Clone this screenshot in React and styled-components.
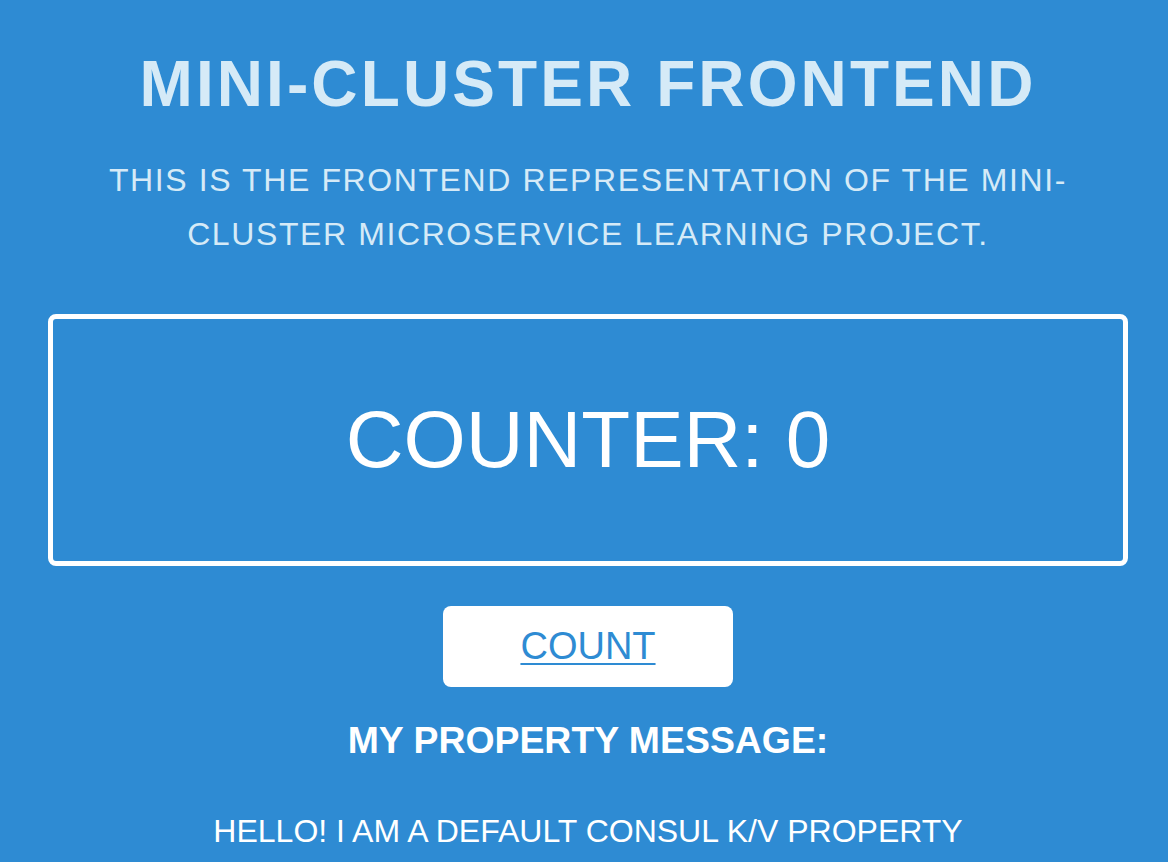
import React, { useState } from "react";
import styled, { createGlobalStyle } from "styled-components";

const BLUE = "#2e8bd3";

const GlobalStyle = createGlobalStyle`
  html, body {
    margin: 0;
    padding: 0;
    background: ${BLUE};
  }
  body {
    font-family: "Liberation Sans", Arial, sans-serif;
    min-height: 100vh;
    overflow: hidden;
  }
`;

const Page = styled.div`
  display: flex;
  flex-direction: column;
  align-items: center;
  padding: 47px 40px 0 48px;
  text-align: center;
  color: #fff;
`;

const Title = styled.h1`
  margin: 0;
  font-size: 64px;
  line-height: 74px;
  font-weight: 700;
  letter-spacing: 3.1px;
  color: #d5eaf7;
  text-transform: uppercase;
`;

const Subtitle = styled.p`
  margin: 32px 0 0;
  padding: 0 50px;
  font-size: 32px;
  line-height: 54px;
  letter-spacing: 1.6px;
  color: #d5eaf7;
  text-transform: uppercase;
`;

const CounterBox = styled.div`
  box-sizing: border-box;
  align-self: stretch;
  margin-top: 53px;
  height: 252px;
  border: 5px solid #fff;
  border-radius: 8px;
  display: flex;
  align-items: center;
  justify-content: center;
  font-size: 80px;
  text-transform: uppercase;
`;

const CountButton = styled.a`
  box-sizing: border-box;
  margin-top: 40px;
  width: 290px;
  height: 81px;
  background: #fff;
  border-radius: 8px;
  display: flex;
  align-items: center;
  justify-content: center;
  font-size: 38px;
  color: ${BLUE};
  text-transform: uppercase;
  text-decoration: underline;
  text-decoration-thickness: 2px;
  text-underline-offset: 4px;
  cursor: pointer;
`;

const MessageLabel = styled.h3`
  margin: 32px 0 0;
  font-size: 37.4px;
  font-weight: 700;
  text-transform: uppercase;
`;

const Message = styled.p`
  margin: 51px 0 0;
  font-size: 32px;
  text-transform: uppercase;
`;

export default function App() {
  const [count, setCount] = useState(0);

  return (
    <>
      <GlobalStyle />
      <Page>
        <Title>Mini-Cluster Frontend</Title>
        <Subtitle>
          This is the frontend representation of the mini-cluster microservice
          learning project.
        </Subtitle>
        <CounterBox>Counter: {count}</CounterBox>
        <CountButton onClick={() => setCount((c) => c + 1)}>Count</CountButton>
        <MessageLabel>My property message:</MessageLabel>
        <Message>Hello! I am a default Consul K/V property</Message>
      </Page>
    </>
  );
}
